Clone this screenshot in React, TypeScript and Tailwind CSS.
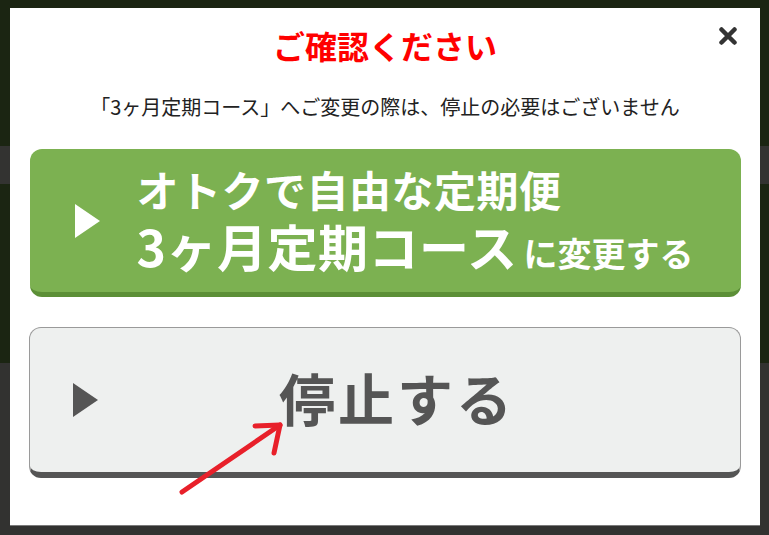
import React from 'react';

const jp = { fontFamily: '"Noto Sans CJK JP", "Noto Sans", sans-serif' };

function Triangle({ color }: { color: string }) {
  return (
    <svg width="25" height="34" viewBox="0 0 25 34" className="shrink-0">
      <polygon points="0,0 25,17 0,34" fill={color} />
    </svg>
  );
}

export default function App() {
  return (
    <div className="relative w-[769px] h-[535px] overflow-hidden" style={jp}>
      {/* dimmed page behind the modal */}
      <div className="flex flex-col h-full">
        <div className="h-[146px] bg-[#1b2512]" />
        <div className="h-[38px] bg-[#333331]" />
        <div className="h-[179px] bg-[#1b2512]" />
        <div className="flex-1 bg-[#323230]" />
      </div>

      {/* modal */}
      <div className="absolute left-[10px] top-[8px] w-[750px] h-[518px] bg-white border-b border-[#7a7a7a]">
        <div className="flex flex-col items-center pt-[17px] px-[20px]">
          <h1 className="h-[40px] leading-[40px] text-[32px] font-bold text-[#ff0000]">ご確認ください</h1>
          <p className="mt-[30px] h-[24px] leading-[24px] text-[20px] text-[#222]">
            「3ヶ月定期コース」へご変更の際は、停止の必要はございません
          </p>

          {/* green button */}
          <button className="mt-[30px] w-[711px] h-[148px] rounded-[12px] bg-[#7cb151] border-b-[5px] border-[#5c8f37] flex items-center pl-[45px] text-white">
            <Triangle color="#ffffff" />
            <div className="ml-[37px] pb-[8px] flex flex-col items-start font-bold">
              <span className="h-[57px] leading-[57px] text-[42px] tracking-[0.5px]">オトクで自由な定期便</span>
              <span className="h-[57px] leading-[57px] flex items-baseline">
                <span className="text-[50px] tracking-[0.5px]">3ヶ月定期コース</span>
                <span className="text-[34px] ml-[6px]">に変更する</span>
              </span>
            </div>
          </button>

          {/* gray button */}
          <button className="mt-[30px] w-[712px] h-[151px] rounded-[12px] bg-[#eef0ef] border border-[#9a9a9a] border-b-[6px] border-b-[#555555] flex items-center pl-[43px] pr-[44px]">
            <Triangle color="#555555" />
            <span className="flex-1 pb-[6px] text-center text-[56px] font-bold tracking-[3px] text-[#555555] leading-none">停止する</span>
          </button>
        </div>

        {/* close */}
        <button className="absolute left-[709px] top-[19px] w-[18px] h-[18px]">
          <svg width="18" height="18" viewBox="0 0 18 18">
            <path d="M2.5 2.5 L15.5 15.5 M15.5 2.5 L2.5 15.5" stroke="#333333" strokeWidth="4.5" strokeLinecap="round" />
          </svg>
        </button>

        {/* red arrow annotation */}
        <svg className="absolute left-0 top-0 pointer-events-none" width="750" height="518">
          <g stroke="#e8202a" strokeWidth="5" strokeLinecap="round" strokeLinejoin="round" fill="none">
            <path d="M172 484 L270 417" />
            <path d="M245 418 L270 417 L264 445" />
          </g>
        </svg>
      </div>
    </div>
  );
}
